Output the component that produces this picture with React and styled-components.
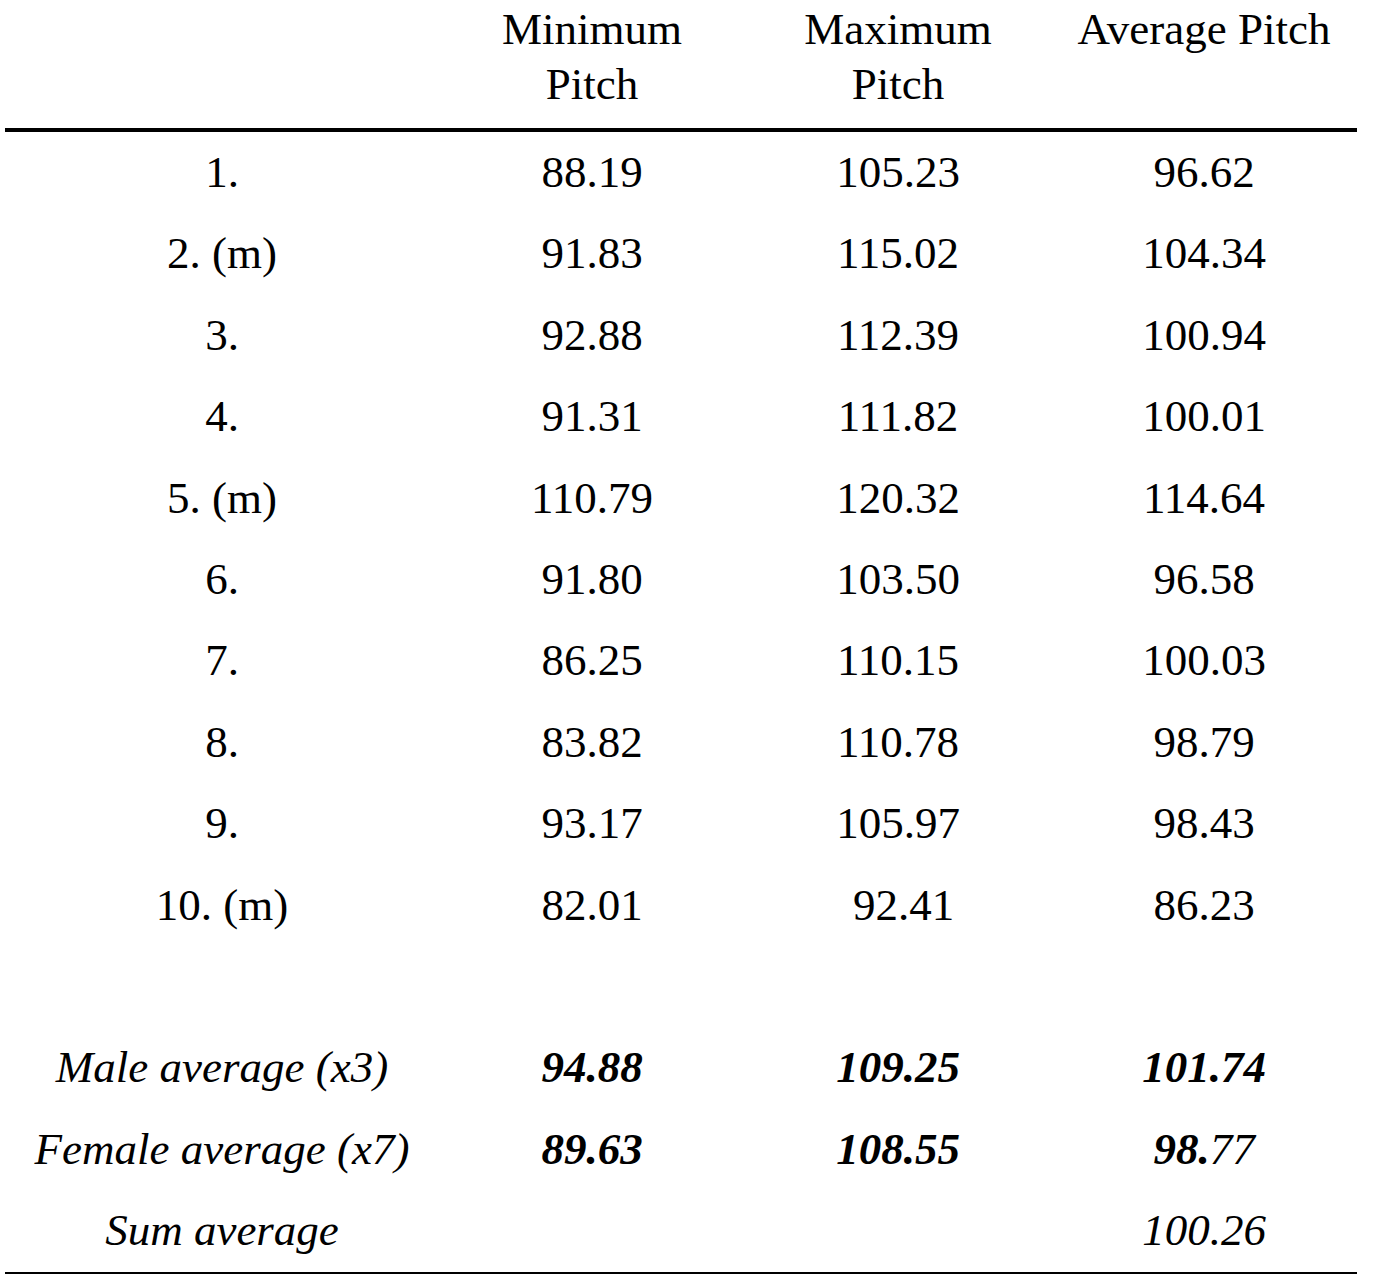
import React from "react";
import styled, { createGlobalStyle } from "styled-components";

const Global = createGlobalStyle`
  html, body { margin: 0; padding: 0; background: #fff; }
  body { font-family: "Liberation Serif", "Times New Roman", serif; color: #000; }
`;

const Page = styled.div`
  padding: 0 0 0 5px;
  width: 1352px;
`;

const Table = styled.table`
  width: 1352px;
  table-layout: fixed;
  border-collapse: collapse;
  font-family: "Liberation Serif", "Times New Roman", serif;
  font-size: 45px;
  color: #000;
`;

const Head = styled.thead`
  border-bottom: 4px solid #000;
`;

const HeadCell = styled.th`
  font-weight: normal;
  text-align: center;
  vertical-align: top;
  line-height: 55px;
  height: 130px;
  padding: 2px 0 0 0;
  box-sizing: border-box;
`;

const Body = styled.tbody`
  border-bottom: 2px solid #000;
`;

const Cell = styled.td`
  text-align: center;
  vertical-align: middle;
  height: 81.4px;
  padding: 0;
  line-height: 81.4px;
  white-space: nowrap;
  font-style: ${(p) => (p.$italic ? "italic" : "normal")};
  font-weight: ${(p) => (p.$bold ? "bold" : "normal")};
`;

const Plain = styled.span`
  font-weight: normal;
`;

const rows = [
  ["1.", "88.19", "105.23", "96.62"],
  ["2. (m)", "91.83", "115.02", "104.34"],
  ["3.", "92.88", "112.39", "100.94"],
  ["4.", "91.31", "111.82", "100.01"],
  ["5. (m)", "110.79", "120.32", "114.64"],
  ["6.", "91.80", "103.50", "96.58"],
  ["7.", "86.25", "110.15", "100.03"],
  ["8.", "83.82", "110.78", "98.79"],
  ["9.", "93.17", "105.97", "98.43"],
  ["10. (m)", "82.01", "\u00a092.41", "86.23"],
];

export default function App() {
  return (
    <Page>
      <Global />
      <Table>
        <colgroup>
          <col style={{ width: 434 }} />
          <col style={{ width: 306 }} />
          <col style={{ width: 306 }} />
          <col style={{ width: 306 }} />
        </colgroup>
        <Head>
          <tr>
            <HeadCell />
            <HeadCell>
              Minimum
              <br />
              Pitch
            </HeadCell>
            <HeadCell>
              Maximum
              <br />
              Pitch
            </HeadCell>
            <HeadCell>Average Pitch</HeadCell>
          </tr>
        </Head>
        <Body>
          {rows.map((r) => (
            <tr key={r[0]}>
              {r.map((v, i) => (
                <Cell key={i}>{v}</Cell>
              ))}
            </tr>
          ))}
          <tr>
            <Cell />
            <Cell />
            <Cell />
            <Cell />
          </tr>
          <tr>
            <Cell $italic>Male average (x3)</Cell>
            <Cell $italic $bold>94.88</Cell>
            <Cell $italic $bold>109.25</Cell>
            <Cell $italic $bold>101.74</Cell>
          </tr>
          <tr>
            <Cell $italic>Female average (x7)</Cell>
            <Cell $italic $bold>89.63</Cell>
            <Cell $italic $bold>108.55</Cell>
            <Cell $italic $bold>
              98.<Plain>77</Plain>
            </Cell>
          </tr>
          <tr>
            <Cell $italic>Sum average</Cell>
            <Cell />
            <Cell />
            <Cell $italic>100.26</Cell>
          </tr>
        </Body>
      </Table>
    </Page>
  );
}
